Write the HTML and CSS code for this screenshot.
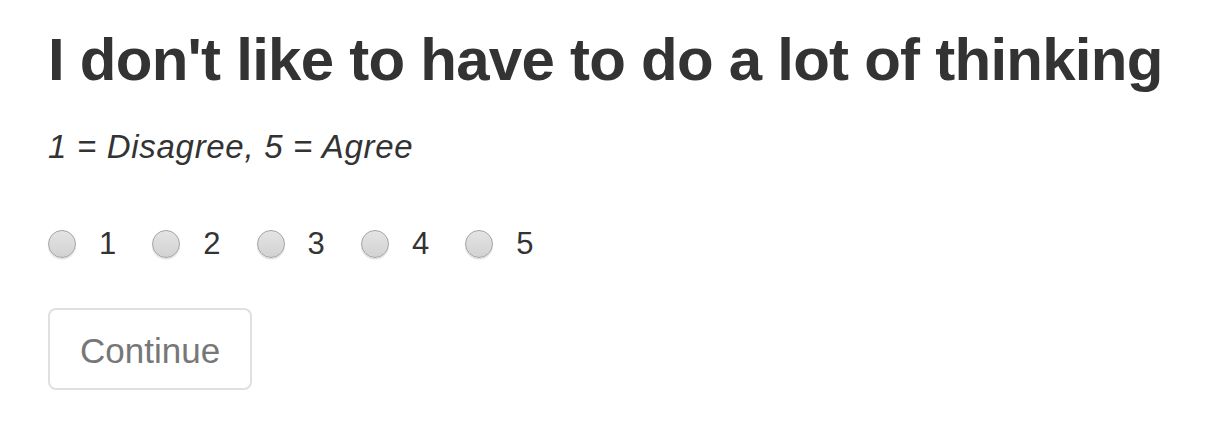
FILE: index.html
```html
<!DOCTYPE html>
<html>
<head>
<meta charset="utf-8">
<link rel="stylesheet" href="styles.css">
</head>
<body>
<div class="page">
  <h2 class="question">I don't like to have to do a lot of thinking</h2>
  <p class="scale">1 = Disagree, 5 = Agree</p>
  <div class="options">
    <label class="option"><span class="radio"></span><span class="num">1</span></label>
    <label class="option"><span class="radio"></span><span class="num">2</span></label>
    <label class="option"><span class="radio"></span><span class="num">3</span></label>
    <label class="option"><span class="radio"></span><span class="num">4</span></label>
    <label class="option"><span class="radio"></span><span class="num">5</span></label>
  </div>
  <button class="btn">Continue</button>
</div>
</body>
</html>
```

FILE: styles.css
```css
html, body {
  margin: 0;
  padding: 0;
  background: #fff;
}
.page {
  padding: 0 48px;
  font-family: "Liberation Sans", Arial, sans-serif;
  color: #333;
  display: flex;
  flex-direction: column;
  align-items: flex-start;
}
.question {
  margin: 24px 0 0;
  font-size: 60px;
  line-height: 72px;
  font-weight: 700;
  letter-spacing: -0.75px;
  white-space: nowrap;
}
.scale {
  margin: 31px 0 0;
  font-size: 33px;
  line-height: 40px;
  font-style: italic;
  letter-spacing: 0.7px;
}
.options {
  display: flex;
  margin-top: 57px;
  height: 40px;
  align-items: center;
}
.option {
  display: flex;
  align-items: center;
  width: 104.3px;
}
.radio {
  width: 26px;
  height: 26px;
  border-radius: 50%;
  border: 1.5px solid #a4a4a4;
  background: linear-gradient(#e4e4e4, #d2d2d2);
  box-shadow: 0 1.5px 1px rgba(0,0,0,0.12);
  flex: none;
}
.num {
  margin-left: 23px;
  font-size: 31px;
}
.btn {
  margin-top: 44px;
  height: 82px;
  padding: 4px 30px 0;
  border: 2px solid #e0e0e0;
  border-radius: 8px;
  background: #fff;
  color: #777;
  font-family: "Liberation Sans", Arial, sans-serif;
  font-size: 35px;
}
```
